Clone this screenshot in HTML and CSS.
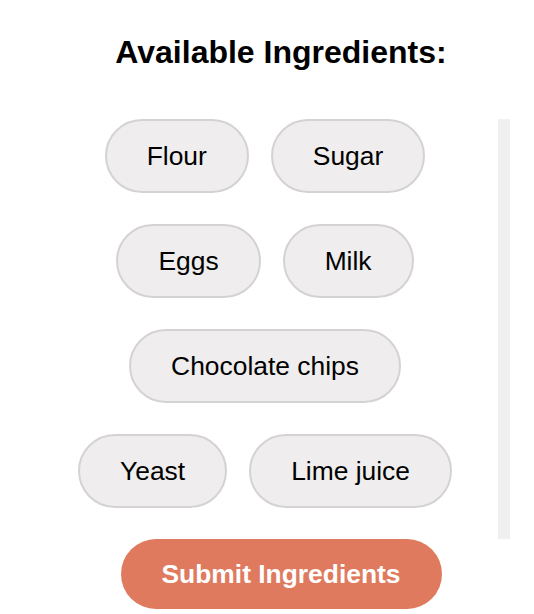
FILE: index.html
```html
<!DOCTYPE html>
<html lang="en">
<head>
<meta charset="utf-8">
<title>Available Ingredients</title>
<link rel="stylesheet" href="styles.css">
</head>
<body>
<main class="app">
  <h1 class="title">Available Ingredients:</h1>
  <div class="panel">
    <div class="pills">
      <button class="pill">Flour</button>
      <button class="pill">Sugar</button>
      <button class="pill">Eggs</button>
      <button class="pill">Milk</button>
      <button class="pill">Chocolate chips</button>
      <button class="pill">Yeast</button>
      <button class="pill">Lime juice</button>
    </div>
    <div class="bar"></div>
  </div>
  <button class="submit">Submit Ingredients</button>
</main>
</body>
</html>
```

FILE: styles.css
```css
html, body {
  margin: 0;
  background: #ffffff;
}

body {
  font-family: "Liberation Sans", Arial, Helvetica, sans-serif;
  color: #000;
}

.app {
  display: flex;
  flex-direction: column;
  align-items: center;
  padding: 34px 0 0 28px;
}

.title {
  margin: 0 0 48px;
  font-size: 32px;
  font-weight: bold;
  line-height: 37px;
  text-align: center;
}

.panel {
  align-self: stretch;
  display: flex;
  padding: 0 24px 0 4px;
}

.pills {
  flex: 1;
  display: flex;
  flex-wrap: wrap;
  justify-content: center;
  gap: 31px 22px;
  padding: 0 20px 31px;
}

.bar {
  width: 12px;
  background: #f0f0f0;
}

.pill {
  font-family: inherit;
  font-size: 26.4px;
  line-height: 30px;
  color: #000;
  background: #efeded;
  border: 2px solid #d5d2d2;
  border-radius: 999px;
  padding: 20px 40px;
  margin: 0;
  cursor: pointer;
}

.submit {
  font-family: inherit;
  font-size: 26.4px;
  font-weight: bold;
  line-height: 30px;
  color: #fff;
  background: #e07a5f;
  border: none;
  border-radius: 999px;
  padding: 20px 41px;
  margin: 0;
  cursor: pointer;
}
```
